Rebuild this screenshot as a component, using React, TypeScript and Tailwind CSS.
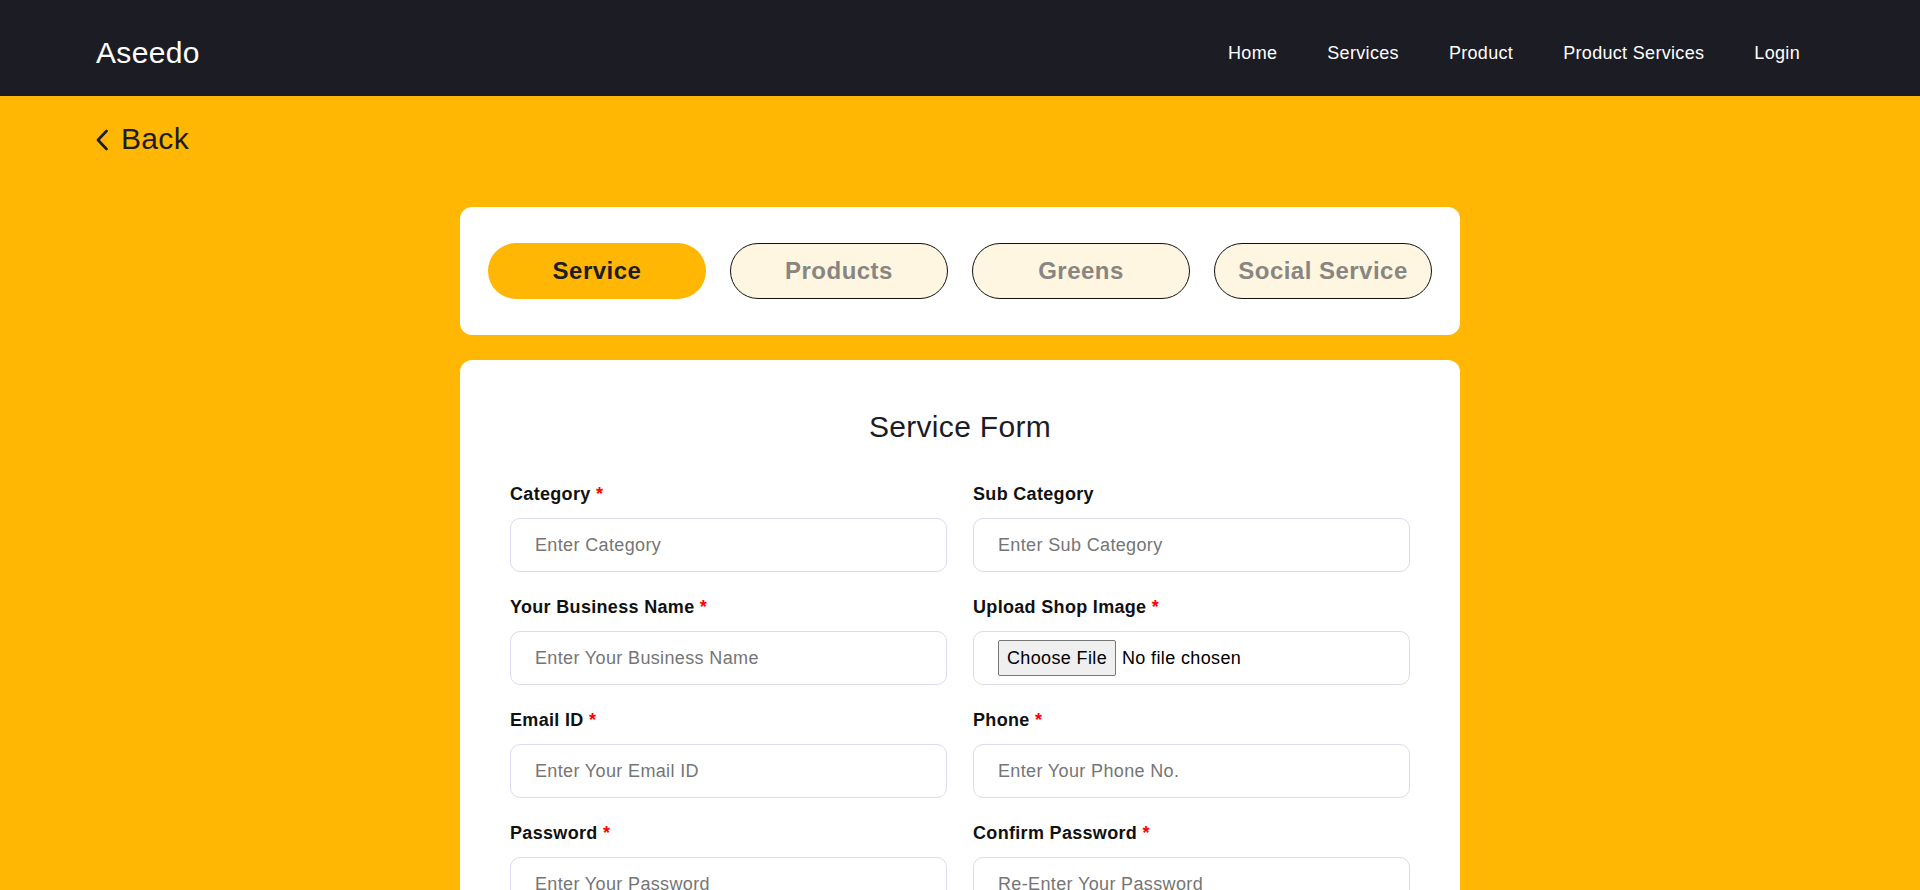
import React from "react";

const links = ["Home", "Services", "Product", "Product Services", "Login"];
const tabs = ["Service", "Products", "Greens", "Social Service"];

type Field = { label: string; placeholder?: string; required?: boolean; file?: boolean; type?: string };

const fields: Field[] = [
  { label: "Category", placeholder: "Enter Category", required: true },
  { label: "Sub Category", placeholder: "Enter Sub Category" },
  { label: "Your Business Name", placeholder: "Enter Your Business Name", required: true },
  { label: "Upload Shop Image", required: true, file: true },
  { label: "Email ID", placeholder: "Enter Your Email ID", required: true },
  { label: "Phone", placeholder: "Enter Your Phone No.", required: true },
  { label: "Password", placeholder: "Enter Your Password", required: true, type: "password" },
  { label: "Confirm Password", placeholder: "Re-Enter Your Password", required: true, type: "password" },
  { label: "Address", placeholder: "Enter Your Address", required: true },
  { label: "City", placeholder: "Enter Your City", required: true },
];

export default function App() {
  return (
    <div className="min-h-screen bg-[#FFB703] font-['Liberation_Sans',Arial,sans-serif] tracking-[0.02em] pb-16">
      <nav className="h-24 bg-[#1c1c24] flex items-center justify-between px-24 pt-[10px]">
        <div className="text-[30px] leading-9 text-white">Aseedo</div>
        <ul className="flex">
          {links.map((l) => (
            <li key={l} className="px-[25px] last:pr-6 text-lg leading-7 text-white">
              {l}
            </li>
          ))}
        </ul>
      </nav>

      <div className="px-24 pt-[25px]">
        <div className="flex items-center gap-[13px] text-[#1c1c24]">
          <svg width="12" height="22" viewBox="0 0 12 22" fill="none" className="mt-[1px]">
            <polyline points="10.5,2 2,11 10.5,20" stroke="#1c1c24" strokeWidth="2.6" strokeLinecap="round" strokeLinejoin="round" />
          </svg>
          <span className="text-[30px] leading-9">Back</span>
        </div>
      </div>

      <div className="w-[1000px] mx-auto mt-[50px] bg-white rounded-xl px-7 py-9 grid grid-cols-4 gap-6">
        {tabs.map((t, i) =>
          i === 0 ? (
            <button key={t} className="h-14 rounded-full bg-[#FFB703] text-2xl font-bold tracking-[0.02em] text-[#1d1d27]">
              {t}
            </button>
          ) : (
            <button key={t} className="h-14 rounded-full bg-[#FFF6E1] border border-[#111] text-2xl font-bold tracking-[0.02em] text-[#898580]">
              {t}
            </button>
          )
        )}
      </div>

      <div className="w-[1000px] mx-auto mt-[25px] bg-white rounded-xl px-[50px] pt-[49px] pb-12">
        <h1 className="text-center text-[30px] leading-9 text-[#1c1c24] mb-[35px]">Service Form</h1>
        <div className="grid grid-cols-2 gap-x-[26px] gap-y-[21px]">
          {fields.map((f) => (
            <div key={f.label} className="flex flex-col">
              <label className="text-lg leading-7 font-bold text-[#111] mb-[10px]">
                {f.label}
                {f.required && <span className="text-[#ff0000]"> *</span>}
              </label>
              {f.file ? (
                <div className="h-[54px] w-full rounded-[10px] border border-[#dcd9f2] px-6 flex items-center">
                  <input
                    type="file"
                    className="text-lg tracking-[0.02em] text-black file:mr-[6px] file:border file:border-[#767676] file:bg-[#efefef] file:px-[8px] file:py-[3px] file:rounded-[2px] file:text-lg file:text-black file:tracking-[0.02em]"
                  />
                </div>
              ) : (
                <input
                  type={f.type || "text"}
                  placeholder={f.placeholder}
                  className="h-[54px] w-full rounded-[10px] border border-[#dcd9f2] px-6 text-lg tracking-[0.02em] text-black placeholder:text-[#757575] outline-none"
                />
              )}
            </div>
          ))}
        </div>
      </div>
    </div>
  );
}
